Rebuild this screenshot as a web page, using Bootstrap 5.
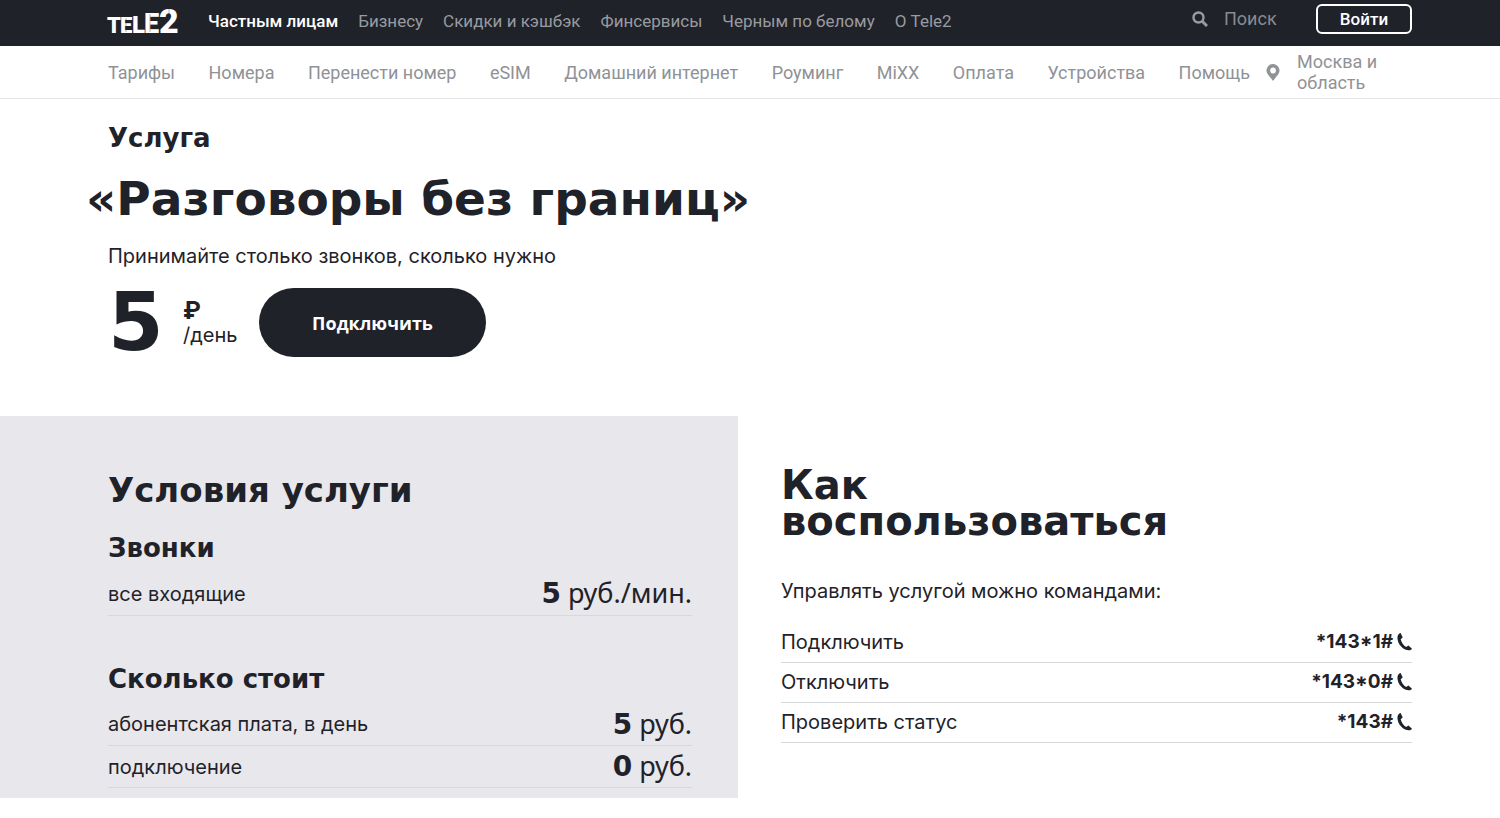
<!doctype html>
<html lang="ru">
<head>
<meta charset="utf-8">
<meta name="viewport" content="width=device-width, initial-scale=1">
<title>Tele2 — Услуга «Разговоры без границ»</title>
<link href="https://cdn.jsdelivr.net/npm/bootstrap@5.3.0/dist/css/bootstrap.min.css" rel="stylesheet">
<style>
  :root { --ink: #1f2229; --muted: #8f9296; --panel: #e8e7ec; --rule: #d5d9dc; }
  body { font-family: Inter, "Noto Sans", sans-serif; font-size: 20px; line-height: 30px; color: var(--ink); }
  a { color: inherit; text-decoration: none; }
  .page-pad { padding-left: 108px; padding-right: 88px; }
  .display-face { font-family: "DejaVu Sans", Verdana, sans-serif; font-weight: 700; margin: 0; }

  .topbar { background: var(--ink); color: #999ba0; height: 46px; padding-bottom: 4px; font: 17px/24px Roboto, sans-serif; }
  .brand-link { width: 80px; margin-right: 20px; }
  .brand-link svg { display: block; overflow: visible; }
  .top-links { gap: 20px; }
  .top-links .active { color: #fff; font-weight: 500; }
  .search-box { width: 86px; margin-right: 6px; padding: 0; border: 0; background: none; color: #999ba0; font-size: 18px; outline-offset: 4px; }
  .search-box::placeholder { color: #888b90; opacity: 1; }
  .login-btn { width: 96px; height: 30px; padding: 0; border: 2px solid #fff; border-radius: 6px; color: #fff; font: 500 17px/24px Roboto, sans-serif; }
  .login-btn:hover { background: #fff; color: var(--ink); }

  .subnav { height: 53px; border-bottom: 1px solid #e6e6e8; color: var(--muted); font: 18px/21px Roboto, sans-serif; }
  .subnav ul { flex: 0 1 1142px; }
  .region-link { width: 146px; gap: 17px; }

  .offer { padding-top: 25px; padding-bottom: 59px; }
  .kicker { font-size: 26px; line-height: 28px; }
  .offer-title { font-size: 47px; line-height: 56px; margin: 19px 0 14px -22px; }
  .price-row { margin-top: 17px; height: 69px; }
  .price-num { font-size: 80px; line-height: 69px; width: 75px; }
  .price-unit { width: 76px; line-height: 25px; }
  .price-unit b { font-size: 24px; }
  .join-btn { width: 227px; height: 69px; background: var(--ink); color: #fff; font: 700 18px/24px "Open Sans", sans-serif; }
  .join-btn:hover { background: #000; color: #fff; }

  .terms { width: 49.2%; background: var(--panel); padding: 54px 46px 10px 108px; }
  .usage { flex: 1; padding: 51px 88px 10px 43px; }
  .terms h2 { font-size: 34px; line-height: 40px; margin-bottom: 24px; }
  .terms h3 { font-size: 26px; line-height: 28px; margin-bottom: 11px; }
  .usage h2 { font-size: 40px; line-height: 36px; margin-bottom: 37px; }
  .usage p { margin-bottom: 16px; }

  .rows { width: 100%; border-collapse: collapse; }
  .rows th { font-weight: 400; }
  .rows td { text-align: right; white-space: nowrap; }
  .rows tr { height: 42px; border-bottom: 1px solid var(--rule); }
  .rows th, .rows td { padding: 0; }
  .terms td { font-size: 27px; font-family: "Noto Sans", sans-serif; }
  .terms td b { font: 700 28px/30px "DejaVu Sans", sans-serif; }
  .terms .calls { margin-bottom: 49px; }
  .usage .rows tr { height: 40px; }
  .usage td { font-weight: 700; font-size: 19px; }
  .usage td a { display: inline-flex; align-items: center; gap: 4px; }
</style>
</head>
<body>
<header>
  <div class="topbar page-pad d-flex align-items-center">
    <a class="brand-link" href="#" aria-label="Tele2">
      <svg width="72" height="34" viewBox="0 0 72 34" fill="#fff" font-family="Roboto, sans-serif" font-weight="900">
        <text y="29"><tspan x="-1" font-size="22">T</tspan><tspan x="12" font-size="22">E</tspan><tspan x="24" font-size="24">L</tspan><tspan x="36" font-size="27">E</tspan><tspan x="51" font-size="34">2</tspan></text>
        <path d="M18 14v14M42 10v18M61 3v9" stroke="#1f2229" stroke-width=".6" stroke-opacity=".6"/>
      </svg>
    </a>
    <nav class="top-links d-flex text-nowrap" aria-label="Разделы">
      <a class="active" href="#">Частным лицам</a>
      <a href="#">Бизнесу</a>
      <a href="#">Скидки и кэшбэк</a>
      <a href="#">Финсервисы</a>
      <a href="#">Черным по белому</a>
      <a href="#">О Tele2</a>
    </nav>
    <form class="d-flex align-items-center ms-auto mb-1" role="search">
      <label for="q" class="d-flex me-3" aria-label="Поиск"><svg width="16" height="16" viewBox="0 0 16 16" fill="none" stroke="#999ba0" stroke-width="2.4"><circle cx="6.5" cy="6.5" r="5"/><path d="M10.2 10.2l4.8 4.8" stroke-width="3"/></svg></label>
      <input id="q" class="search-box" type="search" placeholder="Поиск">
      <button type="button" class="btn login-btn">Войти</button>
    </form>
  </div>
  <nav class="subnav page-pad d-flex align-items-center justify-content-between" aria-label="Услуги">
    <ul class="list-unstyled d-flex justify-content-between mb-0 text-nowrap">
      <li><a href="#">Тарифы</a></li>
      <li><a href="#">Номера</a></li>
      <li><a href="#">Перенести номер</a></li>
      <li><a href="#">eSIM</a></li>
      <li><a href="#">Домашний интернет</a></li>
      <li><a href="#">Роуминг</a></li>
      <li><a href="#">MiXX</a></li>
      <li><a href="#">Оплата</a></li>
      <li><a href="#">Устройства</a></li>
      <li><a href="#">Помощь</a></li>
    </ul>
    <a class="region-link d-flex align-items-center" href="#">
      <svg class="flex-shrink-0" width="14" height="17" viewBox="0 0 14 17" fill="#8f9296"><path fill-rule="evenodd" d="M7 0a6.5 6.5 0 0 0-6.5 6.5C.5 10 4 12.500 7 17c3-4.500 6.500-7 6.500-10.500A6.500 6.500 0 0 0 7 0zm0 3.600a2.900 2.900 0 1 1 0 5.800 2.900 2.900 0 0 1 0-5.800z"/></svg>
      <span>Москва и область</span>
    </a>
  </nav>
</header>

<main>
  <section class="offer page-pad">
    <p class="display-face kicker">Услуга</p>
    <h1 class="display-face offer-title">«Разговоры без границ»</h1>
    <p class="mb-0">Принимайте столько звонков, сколько нужно</p>
    <div class="price-row d-flex align-items-center">
      <span class="display-face price-num">5</span>
      <span class="price-unit d-flex flex-column"><b>₽</b><span>/день</span></span>
      <button type="button" class="btn rounded-pill join-btn">Подключить</button>
    </div>
  </section>

  <div class="d-flex">
    <section class="terms">
      <h2 class="display-face">Условия услуги</h2>
      <h3 class="display-face">Звонки</h3>
      <table class="rows calls">
        <tr><th scope="row">все входящие</th><td><b>5</b> руб./мин.</td></tr>
      </table>
      <h3 class="display-face">Сколько стоит</h3>
      <table class="rows">
        <tr><th scope="row">абонентская плата, в день</th><td><b>5</b> руб.</td></tr>
        <tr><th scope="row">подключение</th><td><b>0</b> руб.</td></tr>
      </table>
    </section>
    <section class="usage">
      <h2 class="display-face">Как<br>воспользоваться</h2>
      <p>Управлять услугой можно командами:</p>
      <svg class="d-none"><symbol id="phone" viewBox="0 0 15 18"><path d="M3.600 0C1.800.3.400 2 .400 4.800c0 6.200 5.600 12.500 11.600 12.500 1.600 0 2.700-.6 3-1.500l-3.600-3.200-2.200 1.500C6.600 12.800 4.300 9.300 3.700 6.200l2-1.600z" fill="#1f2229"/></symbol></svg>
      <table class="rows">
        <tr><th scope="row">Подключить</th><td><a href="tel:*143*1%23">*143*1#<svg width="15" height="18"><use href="#phone"/></svg></a></td></tr>
        <tr><th scope="row">Отключить</th><td><a href="tel:*143*0%23">*143*0#<svg width="15" height="18"><use href="#phone"/></svg></a></td></tr>
        <tr><th scope="row">Проверить статус</th><td><a href="tel:*143%23">*143#<svg width="15" height="18"><use href="#phone"/></svg></a></td></tr>
      </table>
    </section>
  </div>
</main>
<script src="https://cdn.jsdelivr.net/npm/bootstrap@5.3.0/dist/js/bootstrap.bundle.min.js"></script>
</body>
</html>
